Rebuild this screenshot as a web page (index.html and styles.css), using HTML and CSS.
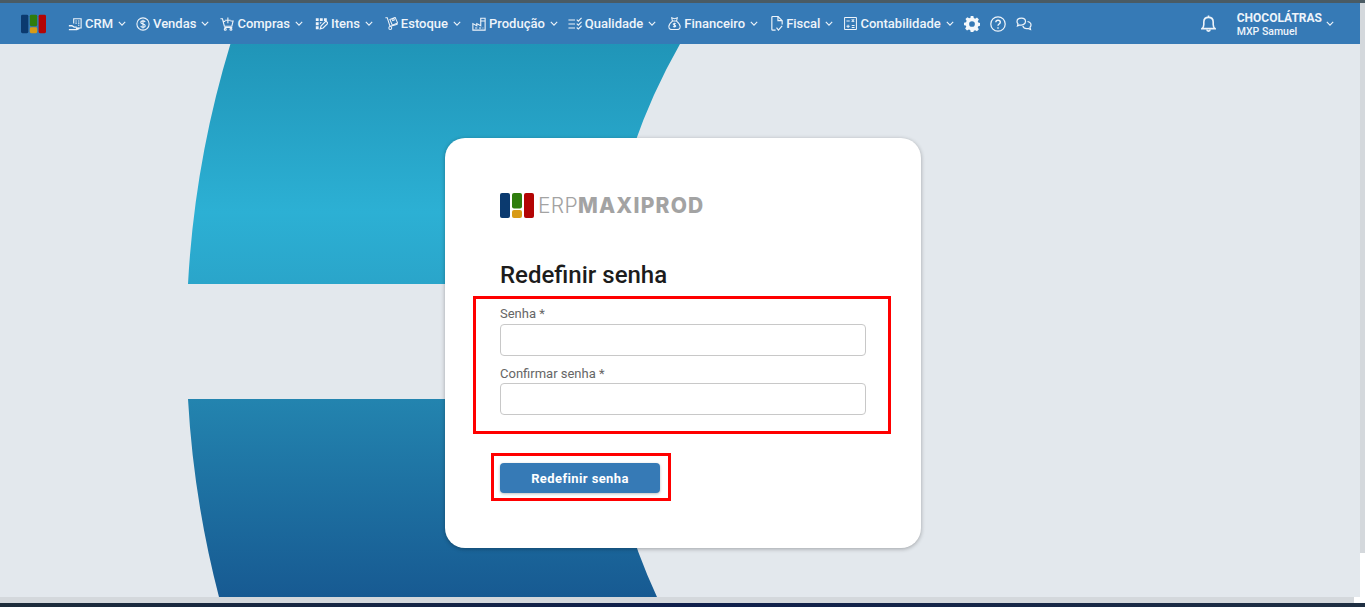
FILE: index.html
```html
<!DOCTYPE html>
<html lang="pt-BR">
<head>
    <meta charset="UTF-8">
    <meta name="viewport" content="width=device-width, initial-scale=1.0">
    <title>Redefinir senha</title>
    <link rel="stylesheet" href="styles.css">
</head>
<body>
    <div class="topline"></div>
    <div class="shell">
        <div class="content">
            <nav class="navbar">
                <svg class="nav-logo" viewBox="0 0 34 25"><rect width="10" height="25" rx="2" fill="#0b3a6f"/><rect x="12" width="10" height="15.500" rx="2" fill="#2f7d0d"/><rect x="12" y="17" width="10" height="8" rx="2" fill="#d89b16"/><rect x="24" width="10" height="25" rx="2" fill="#b30404"/></svg>

                <a class="nav-item m10">
                    <svg class="icon" viewBox="0 0 16 16"><path d="M6.500 7.500V2h8.500v10.500H10M8.500 4.500h1.500M11.500 4.500h1.500M8.500 7h1.500M11.500 7h1.500M11.500 9.500h1.500"/><path d="M1 10h3.500l2.500 1.500h3M1 14.500h9l3-1.500H9" stroke-width="1.500"/></svg>
                    <span>CRM</span>
                    <svg class="chev" viewBox="0 0 10 6"><path d="M1 1l4 4 4-4"/></svg>
                </a>
                <a class="nav-item m11">
                    <svg class="icon" viewBox="0 0 16 16"><circle cx="8" cy="8" r="7"/><path d="M10.500 5.700C10 4.700 9 4.400 8 4.400c-1.400 0-2.500.7-2.500 1.800 0 2.600 5 1.100 5 3.700 0 1.100-1.100 1.800-2.500 1.800-1.200 0-2.200-.5-2.600-1.500M8 3v10"/></svg>
                    <span>Vendas</span>
                    <svg class="chev" viewBox="0 0 10 6"><path d="M1 1l4 4 4-4"/></svg>
                </a>
                <a class="nav-item">
                    <svg class="icon" viewBox="0 0 16 16"><path d="M.5 2h2.300l2.200 8.500h8.500l1.500-6H12M4 5h2M5 12h9"/><path d="M9 .5v6.500M5.800 3.700h6.400"/><circle cx="6" cy="14" r="1.100"/><circle cx="12.500" cy="14" r="1.100"/></svg>
                    <span>Compras</span>
                    <svg class="chev" viewBox="0 0 10 6"><path d="M1 1l4 4 4-4"/></svg>
                </a>
                <a class="nav-item">
                    <svg class="icon small" viewBox="0 0 16 16"><path class="dots" d="M1 1.500h3.500V5H1zM6 1.500h3.500V5H6zM11 1.500h3.500V5H11zM1 6.500h3.500V10H1zM6 6.500h2.500L6 9zM1 11.500h3.500V15H1z"/><path d="M6.500 14.500l1-3.500 6-6 2.500 2.500-6 6z" stroke-width="1.500"/></svg>
                    <span>Itens</span>
                    <svg class="chev" viewBox="0 0 10 6"><path d="M1 1l4 4 4-4"/></svg>
                </a>
                <a class="nav-item m11">
                    <svg class="icon small" viewBox="0 0 16 16"><path d="M.5 1h2.300l3.400 10.500L15.500 9"/><path d="M6 3l6.500-2.500 3 7-6.500 2.500zM8.500 2l1 2.500 2-.8-1-2.500"/><circle cx="6.500" cy="13.500" r="1.800"/></svg>
                    <span>Estoque</span>
                    <svg class="chev" viewBox="0 0 10 6"><path d="M1 1l4 4 4-4"/></svg>
                </a>
                <a class="nav-item m10">
                    <svg class="icon" viewBox="0 0 16 16"><path d="M1 15V7.500l4.500 2.500V7.500L10 10V1.500h5V15z"/><path d="M3.500 12.500H6M8 12.500h2.500M12 12.500h1M10 4.500h5"/></svg>
                    <span>Produção</span>
                    <svg class="chev" viewBox="0 0 10 6"><path d="M1 1l4 4 4-4"/></svg>
                </a>
                <a class="nav-item">
                    <svg class="icon" viewBox="0 0 16 16"><path d="M.5 3.500h7.500M.5 8h7.500M.5 12.500h7.500M10 3l1.800 1.800L15.500 1M10 7.500l1.800 1.800L15.500 5.500M10 12l1.800 1.800 3.700-3.800"/></svg>
                    <span>Qualidade</span>
                    <svg class="chev" viewBox="0 0 10 6"><path d="M1 1l4 4 4-4"/></svg>
                </a>
                <a class="nav-item m13">
                    <svg class="icon small" viewBox="0 0 16 16"><path d="M5.500 5L4.500 1 8 2l3.500-1-1 4zM5.500 5C3 7 1 9.500 1 12c0 2 1.500 3.500 3.500 3.500h7c2 0 3.500-1.500 3.500-3.500 0-2.500-2-5-4.500-7"/><path d="M9.700 8.500C9.200 8 8.600 7.900 8 7.900c-.9 0-1.600.4-1.600 1.100 0 1.500 3.200.6 3.200 2.100 0 .7-.7 1.100-1.600 1.100-.7 0-1.400-.3-1.700-.8M8 7v6"/></svg>
                    <span>Financeiro</span>
                    <svg class="chev" viewBox="0 0 10 6"><path d="M1 1l4 4 4-4"/></svg>
                </a>
                <a class="nav-item m11">
                    <svg class="icon narrow" viewBox="0 0 12 16"><path d="M4.500 15H1.500a1 1 0 0 1-1-1V1.500a1 1 0 0 1 1-1h5.500l4.500 4.500V9"/><path d="M7 .5V5h4.500M5.500 12.500l2 2.500 4-4.500"/></svg>
                    <span>Fiscal</span>
                    <svg class="chev" viewBox="0 0 10 6"><path d="M1 1l4 4 4-4"/></svg>
                </a>
                <a class="nav-item m10">
                    <svg class="icon small" viewBox="0 0 16 16"><rect x=".7" y=".7" width="14.600" height="14.600" rx=".5"/><path d="M3 5h4M5 9.500v4M3 11.500h4M9.500 3l3 3M12.500 3l-3 3M9.500 10.500h3.500M9.500 13h3.500"/></svg>
                    <span>Contabilidade</span>
                    <svg class="chev" viewBox="0 0 10 6"><path d="M1 1l4 4 4-4"/></svg>
                </a>

                <svg class="tool gear" viewBox="0 0 24 24"><path fill-rule="evenodd" d="M10 0h4l.7 3.100 2 .9 2.800-1.700 2.800 2.900-1.700 2.700.8 2 3.100.7v4l-3.100.7-.8 2 1.700 2.700-2.800 2.900-2.800-1.700-2 .8L14 24h-4l-.7-3.100-2-.8-2.800 1.700-2.800-2.900 1.700-2.700-.8-2L0 14v-4l3.100-.7.8-2L2.200 4.600 5 1.700l2.800 1.700 2-.9zM12 7.700a4.300 4.300 0 1 0 0 8.600 4.300 4.300 0 0 0 0-8.600z"/></svg>
                <svg class="tool line" viewBox="0 0 16 16"><circle cx="8" cy="8" r="7.200"/><path d="M5.800 6.200C5.900 4.900 6.900 4.200 8 4.200c1.300 0 2.300.8 2.300 2 0 1.800-2.300 1.700-2.300 3.500" stroke-width="1.400"/><path d="M7.300 11.300h1.400v1.400H7.300z" class="dots"/></svg>
                <svg class="tool line chat" viewBox="0 0 16 16"><path d="M9.500 5.500C9.500 3.300 7.800 2 5.500 2S1 3.300 1 5.500c0 1 .5 1.900 1 2.400L1.500 10l2.300-1c2.800.6 5.700-1 5.700-3.500z"/><path d="M11.500 5.500c2 .4 3.500 1.700 3.500 3.500 0 1-.5 1.800-1 2.300l.5 2.200-2.500-1c-2.200.4-4.500-.5-5.200-2.500"/></svg>

                <div class="nav-right">
                    <svg class="bell" viewBox="0 0 16 18"><path d="M1 14.500c1.200-1 2-2 2-4.500V7.500C3 4.500 5 2.500 8 2.500s5 2 5 5V10c0 2.500.8 3.500 2 4.500z"/><path d="M8 .5v2M6.300 15.500c0 2.200 3.400 2.200 3.400 0"/></svg>
                    <div class="account">
                        <strong>CHOCOLÁTRAS</strong>
                        <span>MXP Samuel</span>
                    </div>
                    <svg class="chev" viewBox="0 0 10 6"><path d="M1 1l4 4 4-4"/></svg>
                </div>
            </nav>

            <main class="page">
                <svg class="backdrop" viewBox="0 0 1360 553" preserveAspectRatio="none">
                    <defs>
                        <linearGradient id="upper" x1="0" y1="0" x2="0" y2="1">
                            <stop offset="0" stop-color="#2095b8"/>
                            <stop offset=".7" stop-color="#2cb0d4"/>
                            <stop offset="1" stop-color="#2aa5ca"/>
                        </linearGradient>
                        <linearGradient id="lower" x1="0" y1="0" x2="0" y2="1">
                            <stop offset="0" stop-color="#2384af"/>
                            <stop offset="1" stop-color="#175a92"/>
                        </linearGradient>
                    </defs>
                    <path fill="url(#upper)" d="M230.400 0A1009 1009 0 0 0 188 240H604A600 600 0 0 1 680 0Z"/>
                    <path fill="url(#lower)" d="M188 355A1009 1009 0 0 0 219 553H657A600 600 0 0 1 604 355Z"/>
                </svg>

                <section class="card">
                    <div class="brand">
                        <svg class="brand-mark" viewBox="0 0 34 25"><rect width="10" height="25" rx="2" fill="#0b3a6f"/><rect x="12" width="10" height="15.500" rx="2" fill="#2f7d0d"/><rect x="12" y="17" width="10" height="8" rx="2" fill="#d89b16"/><rect x="24" width="10" height="25" rx="2" fill="#b30404"/></svg>
                        <span class="brand-name"><span class="thin">ERP</span><b>MAXIPROD</b></span>
                    </div>

                    <h1>Redefinir senha</h1>

                    <form>
                        <div class="mark fields">
                            <label for="senha">Senha *</label>
                            <input type="password" id="senha">
                            <label for="confirmar">Confirmar senha *</label>
                            <input type="password" id="confirmar">
                        </div>
                        <div class="mark action">
                            <button type="button">Redefinir senha</button>
                        </div>
                    </form>
                </section>
            </main>

            <div class="hbar"></div>
        </div>
        <div class="vbar"></div>
    </div>
    <div class="taskbar"></div>
</body>
</html>
```

FILE: styles.css
```css
* {
    box-sizing: border-box;
}
html, body {
    height: 100%;
}
body {
    margin: 0;
    height: 607px;
    overflow: hidden;
    background: #fff;
    font-family: Roboto, "Liberation Sans", sans-serif;
}
.topline {
    height: 3px;
    background: #4a5b64;
}
.shell {
    display: flex;
    height: 600px;
}
.content {
    flex: 1;
    display: flex;
    flex-direction: column;
    min-width: 0;
}
.vbar {
    width: 5px;
    height: 550px;
    background: #d4d8dc;
}
.hbar {
    width: 1354px;
    height: 6px;
    background: #d4d8dc;
}
.taskbar {
    height: 4px;
    background: linear-gradient(90deg, #1d2c3a, #0f1f4c 50%, #1f2f42);
}

/* top menu */
.navbar {
    display: flex;
    align-items: center;
    flex: 0 0 41px;
    padding-left: 21px;
    background: #367ab6;
    color: #eef4fa;
    font-size: 13px;
    font-weight: 500;
}
.nav-logo {
    width: 25px;
    height: 20px;
    margin-right: 22px;
}
.nav-item {
    display: flex;
    align-items: center;
    gap: 3px;
    margin-right: 12px;
    white-space: nowrap;
}
.nav-item.m10 {
    margin-right: 10px;
}
.nav-item.m11 {
    margin-right: 11px;
}
.nav-item.m13 {
    margin-right: 13px;
}
.nav-item .chev {
    margin-left: 2px;
}
.icon, .chev, .tool.line, .bell {
    fill: none;
    stroke: currentColor;
    stroke-width: 1.250;
}
.icon {
    width: 14px;
    height: 14px;
}
.icon.small {
    width: 13px;
    height: 13px;
}
.icon.narrow {
    width: 12px;
    height: 15px;
}
.icon .dots, .tool .dots {
    fill: currentColor;
    stroke: none;
}
.chev {
    width: 8px;
    height: 5px;
    stroke-width: 1.400;
}
.tool {
    width: 16px;
    height: 16px;
    margin-right: 10px;
}
.gear {
    fill: #f4f8fb;
}
.chat {
    margin-right: 0;
}
.nav-right {
    display: flex;
    align-items: center;
    margin-left: 169px;
}
.bell {
    width: 15px;
    height: 17px;
    margin-right: 21px;
    stroke-width: 1.700;
}
.account {
    display: flex;
    flex-direction: column;
    width: 89px;
    padding-top: 2px;
    line-height: 13px;
}
.account strong {
    font-size: 12px;
    font-weight: 700;
}
.account span {
    font-size: 10.500px;
    font-weight: 500;
}

/* login area */
.page {
    position: relative;
    flex: 1;
    padding: 94px 0 0 445px;
    background: #e3e8ed;
    overflow: hidden;
}
.backdrop {
    position: absolute;
    top: 0;
    left: 0;
    width: 1360px;
    height: 553px;
}
.card {
    position: relative;
    width: 476px;
    height: 410px;
    padding: 55px 55px 0;
    background: #fff;
    border-radius: 20px;
    box-shadow: 0 1px 4px rgba(0, 0, 0, .3);
}
.brand {
    display: flex;
    align-items: center;
    gap: 4px;
    height: 25px;
}
.brand-mark {
    width: 34px;
    height: 25px;
}
.brand-name {
    font-family: Inter, sans-serif;
    font-size: 21px;
    color: #a3a3a3;
    white-space: nowrap;
}
.thin {
    font-weight: 300;
    letter-spacing: .3px;
}
.brand-name b {
    font-weight: 800;
    letter-spacing: 1.200px;
}
h1 {
    margin: 43px 0 0;
    font-size: 24px;
    font-weight: 500;
    line-height: 28px;
    color: #1c1c1c;
}
.mark {
    border: 3px solid #f00;
}
.fields {
    margin: 7px -25px 0 -27px;
    padding: 6px 22px 0 24px;
    height: 138px;
}
label {
    display: block;
    height: 18px;
    font-size: 13px;
    line-height: 18px;
    color: #666;
}
label:first-child {
    height: 19px;
}
input {
    display: block;
    width: 366px;
    height: 32px;
    margin-bottom: 9px;
    border: 1px solid #c8c8c8;
    border-radius: 4px;
    background: #fff;
}
.action {
    width: 180px;
    height: 48px;
    margin: 19px 0 0 -9px;
    padding: 7px 0 0 6px;
}
button {
    display: block;
    width: 160px;
    height: 30px;
    border: none;
    border-radius: 4px;
    background: #367ab6;
    color: #fff;
    font-family: Roboto, sans-serif;
    font-size: 13px;
    font-weight: 700;
    letter-spacing: .4px;
    box-shadow: 0 1px 3px rgba(0, 0, 0, .25);
}
```
